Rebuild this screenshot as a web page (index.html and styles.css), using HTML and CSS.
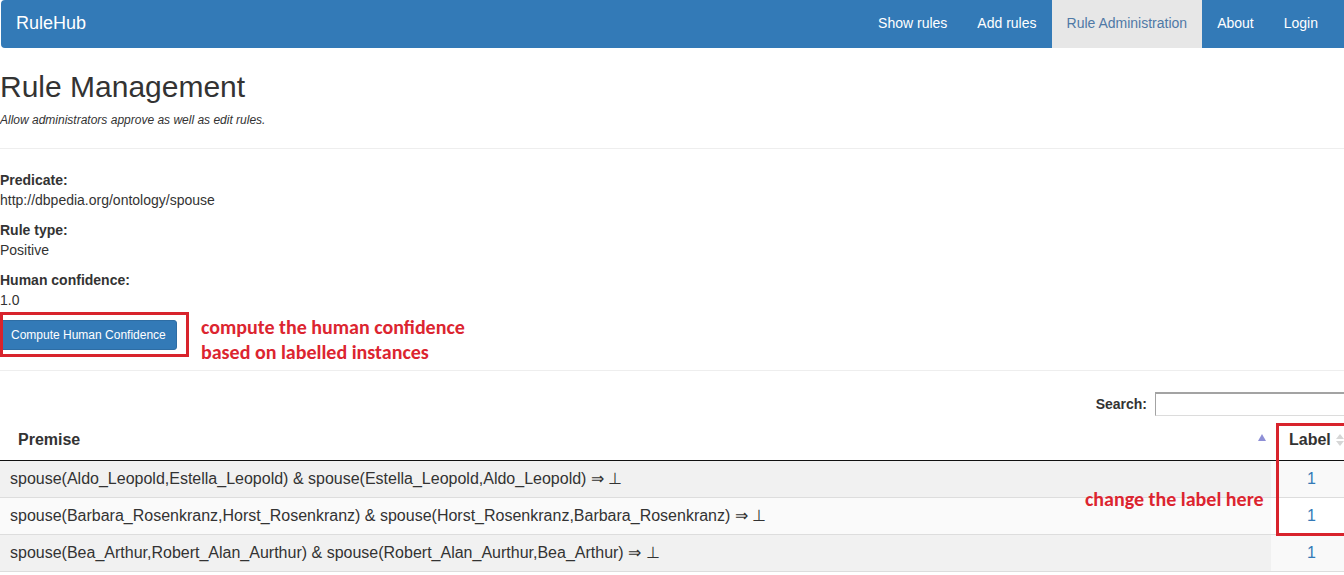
FILE: index.html
```html
<!DOCTYPE html>
<html lang="en">
<head>
<meta charset="utf-8">
<title>RuleHub - Rule Management</title>
<link rel="stylesheet" href="styles.css">
</head>
<body>
<div class="page">
  <nav class="navbar">
    <a class="brand" href="#">RuleHub</a>
    <ul class="nav">
      <li><a href="#">Show rules</a></li>
      <li><a href="#">Add rules</a></li>
      <li class="active"><a href="#">Rule Administration</a></li>
      <li><a href="#">About</a></li>
      <li><a href="#">Login</a></li>
    </ul>
  </nav>

  <header class="page-header">
    <h1>Rule Management</h1>
    <p class="subtitle">Allow administrators approve as well as edit rules.</p>
  </header>

  <section class="details">
    <div class="field">
      <div class="field-label">Predicate:</div>
      <div class="field-value">http://dbpedia.org/ontology/spouse</div>
    </div>
    <div class="field">
      <div class="field-label">Rule type:</div>
      <div class="field-value">Positive</div>
    </div>
    <div class="field">
      <div class="field-label">Human confidence:</div>
      <div class="field-value">1.0</div>
    </div>
    <div class="compute-row">
      <button class="btn" type="button">Compute Human Confidence</button>
      <div class="note-box note-box-btn"></div>
      <div class="note note-compute">compute the human confidence<br>based on labelled instances</div>
    </div>
  </section>

  <hr class="divider">

  <div class="dt-wrapper">
    <div class="dt-filter">
      <label>Search:<input type="search" class="dt-input"></label>
    </div>
    <table class="dt-table">
      <thead>
        <tr>
          <th class="col-premise sort-asc">Premise</th>
          <th class="col-label sort-both">Label</th>
        </tr>
      </thead>
      <tbody>
        <tr class="odd">
          <td class="col-premise">spouse(Aldo_Leopold,Estella_Leopold) &amp; spouse(Estella_Leopold,Aldo_Leopold) ⇒ ⊥</td>
          <td class="col-label"><a href="#">1</a></td>
        </tr>
        <tr class="even">
          <td class="col-premise">spouse(Barbara_Rosenkranz,Horst_Rosenkranz) &amp; spouse(Horst_Rosenkranz,Barbara_Rosenkranz) ⇒ ⊥</td>
          <td class="col-label"><a href="#">1</a></td>
        </tr>
        <tr class="odd">
          <td class="col-premise">spouse(Bea_Arthur,Robert_Alan_Aurthur) &amp; spouse(Robert_Alan_Aurthur,Bea_Arthur) ⇒ ⊥</td>
          <td class="col-label"><a href="#">1</a></td>
        </tr>
      </tbody>
    </table>
    <div class="note-box note-box-label"></div>
    <div class="note note-label">change the label here</div>
  </div>
</div>
</body>
</html>
```

FILE: styles.css
```css
html, body {
  margin: 0;
  padding: 0;
  overflow: hidden;
  background: #fff;
}

body {
  font-family: "Liberation Sans", Arial, Helvetica, sans-serif;
  font-size: 14px;
  line-height: 20px;
  color: #333;
}

.page {
  width: 1352px;
}

/* Navbar */
.navbar {
  margin-left: 1px;
  height: 48px;
  background: #337ab7;
  border-radius: 4px 0 0 4px;
  display: flex;
  align-items: stretch;
  justify-content: space-between;
}

.brand {
  font-size: 18px;
  line-height: 20px;
  color: #fff;
  text-decoration: none;
  padding: 13px 15px;
}

.nav {
  list-style: none;
  margin: 0;
  padding: 0 19px 0 0;
  display: flex;
}

.nav li a {
  display: block;
  padding: 13px 15px 15px;
  line-height: 20px;
  color: #fff;
  text-decoration: none;
}

.nav li.active a {
  background: #e7e7e7;
  color: #4f79a6;
}

/* Header */
.page-header {
  padding-bottom: 19px;
  border-bottom: 1px solid #eee;
}

.page-header h1 {
  margin: 22px 0 0;
  font-size: 30px;
  line-height: 33px;
  font-weight: normal;
  color: #333;
}

.subtitle {
  margin: 9px 0 0;
  font-size: 12px;
  line-height: 17px;
  font-style: italic;
}

/* Details */
.details {
  padding-top: 21px;
  display: flex;
  flex-direction: column;
  gap: 10px;
}

.field-label {
  font-weight: bold;
}

.compute-row {
  position: relative;
  height: 30px;
}

.btn {
  display: block;
  margin: 0;
  height: 30px;
  padding: 5px 10px;
  font-family: "Liberation Sans", Arial, sans-serif;
  font-size: 12px;
  line-height: 18px;
  color: #fff;
  background: #337ab7;
  border: 1px solid #2e6da4;
  border-radius: 3px;
  cursor: pointer;
}

.note-box {
  position: absolute;
  border: 3px solid #d8232c;
  box-sizing: border-box;
  pointer-events: none;
}

.note-box-btn {
  left: 0;
  top: -8px;
  width: 189px;
  height: 45px;
}

.note {
  position: absolute;
  font-family: Carlito, Lato, "Open Sans", sans-serif;
  font-weight: bold;
  font-size: 20px;
  line-height: 25px;
  color: #dc2530;
  white-space: nowrap;
}

.note-compute {
  left: 201px;
  top: -5px;
}

.divider {
  margin: 20px 0 21px;
  border: 0;
  border-top: 1px solid #eee;
  height: 0;
}

/* DataTable */
.dt-wrapper {
  position: relative;
}

.dt-filter {
  display: flex;
  justify-content: flex-end;
  margin-bottom: 4px;
}

.dt-filter label {
  display: flex;
  align-items: center;
  gap: 8px;
  font-weight: bold;
  font-size: 14px;
}

.dt-input {
  box-sizing: border-box;
  width: 197px;
  height: 24px;
  margin: 0;
  padding: 2px 4px;
  border-top: 2px solid #a3a3a3;
  border-left: 1px solid #a3a3a3;
  border-right: 1px solid #dcdcdc;
  border-bottom: 1px solid #dcdcdc;
  background: #fff;
}

.dt-table {
  width: 100%;
  border-collapse: collapse;
  font-size: 16px;
  line-height: 20px;
}

.dt-table th {
  position: relative;
  text-align: left;
  font-weight: bold;
  padding: 10px 18px;
  border-bottom: 1px solid #111;
  color: #333;
}

.dt-table th.col-label {
  width: 45px;
}

.sort-asc::after {
  content: "";
  position: absolute;
  right: 5px;
  top: 14px;
  border-left: 4px solid transparent;
  border-right: 4px solid transparent;
  border-bottom: 7px solid #8e8fd6;
}

.sort-both::before,
.sort-both::after {
  content: "";
  position: absolute;
  right: 8px;
  border-left: 4px solid transparent;
  border-right: 4px solid transparent;
}

.sort-both::before {
  top: 14px;
  border-bottom: 5px solid #d6d6d6;
}

.sort-both::after {
  top: 21px;
  border-top: 5px solid #d6d6d6;
}

.dt-table td {
  padding: 8px 10px;
  border-top: 1px solid #ddd;
  height: 20px;
}

.dt-table tbody tr:first-child td {
  border-top: 0;
}

.dt-table tbody tr:last-child td {
  border-bottom: 1px solid #ddd;
}

.dt-table td.col-label {
  text-align: center;
}

.dt-table td.col-label a {
  color: #337ab7;
  text-decoration: none;
}

tr.odd td.col-premise { background: #f1f1f1; }
tr.odd td.col-label { background: #f9f9f9; }
tr.even td.col-premise { background: #fafafa; }
tr.even td.col-label { background: #fff; }

.note-box-label {
  left: 1276px;
  top: 31px;
  width: 90px;
  height: 113px;
}

.note-label {
  left: 1085px;
  top: 95px;
}
```
